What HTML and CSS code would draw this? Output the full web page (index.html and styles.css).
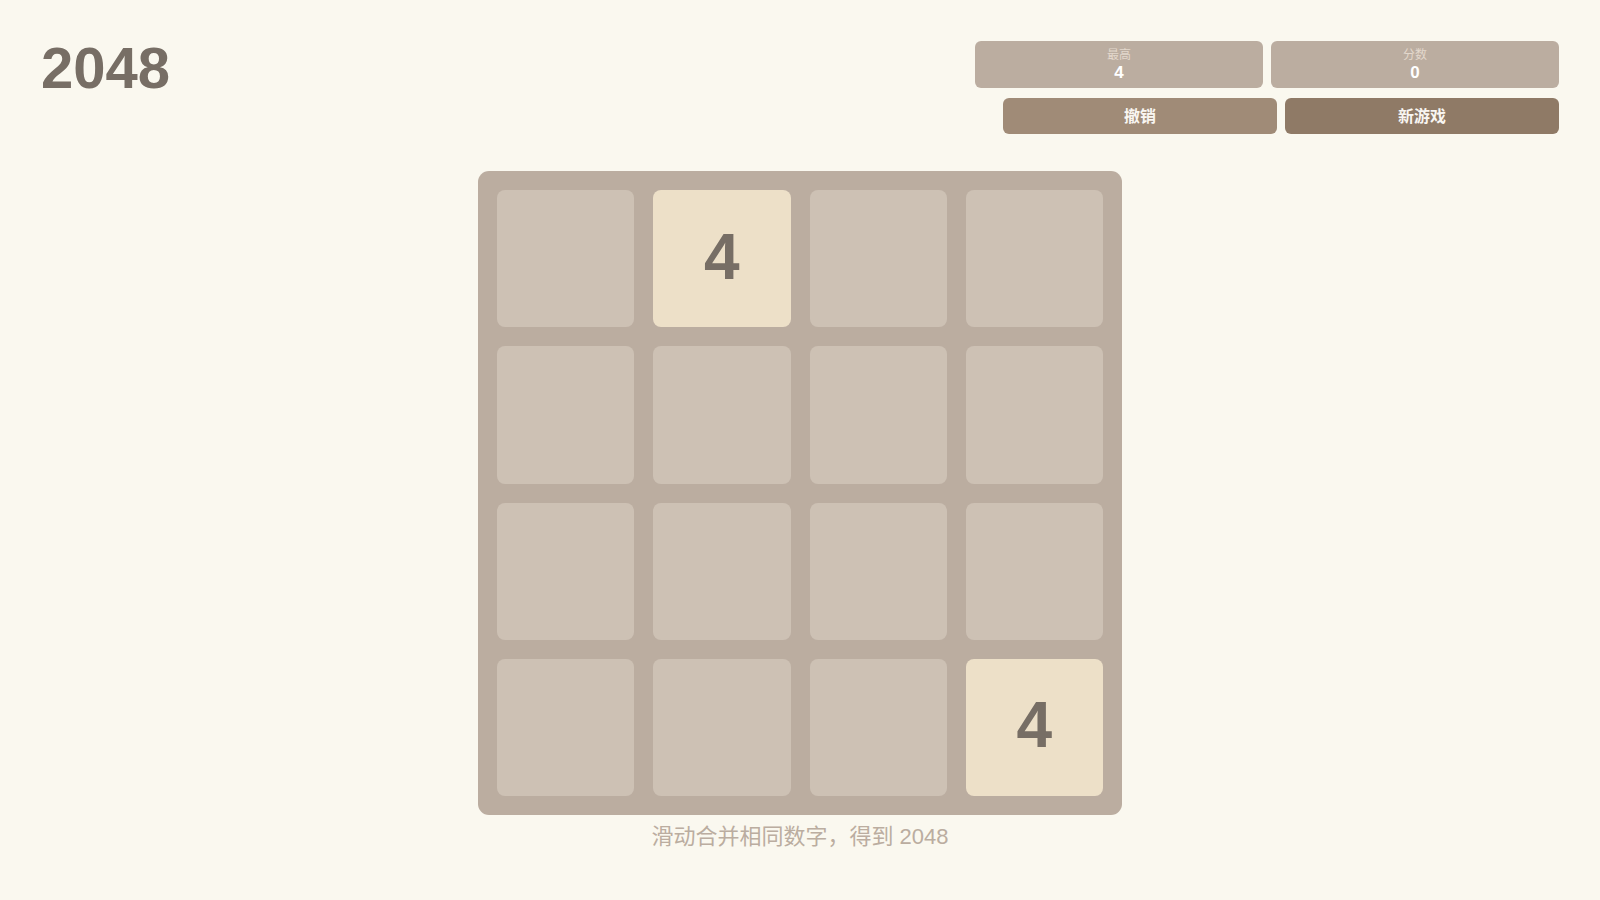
FILE: index.html
```html
<!DOCTYPE html>
<html lang="zh-CN">
<head>
<meta charset="utf-8">
<title>2048</title>
<link rel="stylesheet" href="styles.css">
</head>
<body>
<header class="header">
  <h1 class="title">2048</h1>
  <div class="controls">
    <div class="scores">
      <div class="score-box"><span class="score-label">最高</span><span class="score-value">4</span></div>
      <div class="score-box"><span class="score-label">分数</span><span class="score-value">0</span></div>
    </div>
    <div class="buttons">
      <button class="btn btn-undo">撤销</button>
      <button class="btn btn-new">新游戏</button>
    </div>
  </div>
</header>
<main class="main">
  <div class="board">
    <div class="tile"></div>
    <div class="tile tile-4">4</div>
    <div class="tile"></div>
    <div class="tile"></div>
    <div class="tile"></div>
    <div class="tile"></div>
    <div class="tile"></div>
    <div class="tile"></div>
    <div class="tile"></div>
    <div class="tile"></div>
    <div class="tile"></div>
    <div class="tile"></div>
    <div class="tile"></div>
    <div class="tile"></div>
    <div class="tile"></div>
    <div class="tile tile-4">4</div>
  </div>
  <p class="hint">滑动合并相同数字，得到 2048</p>
</main>
</body>
</html>
```
FILE: styles.css
```css
* { box-sizing: border-box; }
html, body { margin: 0; padding: 0; }
body {
  background: #faf8ef;
  font-family: "Liberation Sans", "Noto Sans CJK SC", sans-serif;
  color: #776e65;
  width: 1600px;
  height: 900px;
  overflow: hidden;
}
.header {
  display: flex;
  justify-content: space-between;
  align-items: flex-start;
  padding: 41px 41px 0 41px;
}
.title {
  margin: -2px 0 0 0;
  font-size: 58px;
  line-height: 1;
  font-weight: 700;
  color: #776e65;
}
.controls {
  display: flex;
  flex-direction: column;
  align-items: flex-end;
  gap: 10px;
}
.scores, .buttons {
  display: flex;
  gap: 8px;
}
.score-box {
  width: 288px;
  height: 47px;
  background: #bbada0;
  border-radius: 6px;
  display: flex;
  flex-direction: column;
  align-items: center;
  justify-content: center;
}
.score-label {
  font-size: 12px;
  line-height: 16px;
  color: #e3d8cc;
  margin-top: 1px;
}
.score-value {
  font-size: 17px;
  line-height: 20px;
  font-weight: 700;
  color: #ffffff;
}
.btn {
  width: 274px;
  height: 36px;
  border: 0;
  border-radius: 6px;
  color: #f9f6f2;
  font-family: "Liberation Sans", "Noto Sans CJK SC", sans-serif;
  font-size: 16px;
  font-weight: 700;
  padding: 0 0 2px 0;
}
.btn-undo { background: #a08b77; }
.btn-new { background: #8f7a66; }
.main {
  display: flex;
  flex-direction: column;
  align-items: center;
  margin-top: 37px;
}
.board {
  width: 644px;
  height: 644px;
  background: #bbada0;
  border-radius: 11px;
  padding: 19px;
  display: grid;
  grid-template-columns: repeat(4, 1fr);
  grid-template-rows: repeat(4, 1fr);
  gap: 19px;
}
.tile {
  background: #cdc1b4;
  border-radius: 8px;
  display: flex;
  align-items: center;
  justify-content: center;
  font-size: 64px;
  font-weight: 700;
  color: #776e65;
  padding-bottom: 4px;
}
.tile-4 { background: #ede0c8; }
.hint {
  margin: 5px 0 0 0;
  font-size: 22px;
  line-height: 34px;
  color: #bbada0;
}
```
